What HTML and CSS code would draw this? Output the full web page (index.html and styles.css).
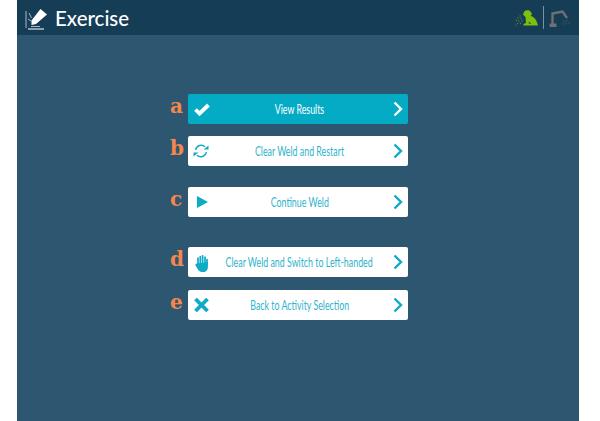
FILE: index.html
```html
<!DOCTYPE html>
<html lang="en">
<head>
<meta charset="utf-8">
<title>Exercise</title>
<link rel="stylesheet" href="styles.css">
</head>
<body>
<div class="stage">
  <header class="header">
    <div class="brand">
      <svg class="logo" viewBox="0 0 24 24" width="24" height="24">
        <path d="M7.500 14.500 16.500 3 23 8.500 12 18l-4.500 1z" fill="#fff"/>
        <path d="M2 5v17M5 7l2.500 5M4 13l3 2" stroke="#a9bac5" stroke-width="1" fill="none"/>
        <path d="M7 20.500h9" stroke="#a9bac5" stroke-width="1"/>
        <path d="M4 23h16" stroke="#a9bac5" stroke-width="1.600"/>
      </svg>
      <h1 class="title"><span class="title-text">Exercise</span></h1>
    </div>
    <div class="status">
      <svg class="frog" viewBox="0 0 24 18" width="24" height="18">
        <path d="M9 3C10 1 14 .5 15.500 2.500L17 5l-1.500 2C18.500 7.500 21.500 10 23 16.500H14.500V15H16l-2-2.500-.5 2H15v2H8.500V15l2.500-1-.5-6L8 5.500z" fill="#7cc00c"/>
        <g fill="#4f8a3a">
          <circle cx="5" cy="7" r=".7"/><circle cx="3" cy="9" r=".7"/><circle cx="6" cy="9.500" r=".7"/><circle cx="1.500" cy="11.500" r=".7"/><circle cx="4" cy="12" r=".7"/><circle cx="7" cy="12" r=".7"/><circle cx="2.500" cy="14.500" r=".7"/><circle cx="5.500" cy="14.500" r=".7"/><circle cx="1" cy="16" r=".6"/>
        </g>
      </svg>
      <span class="divider"></span>
      <svg class="robot" viewBox="0 0 21 18" width="21" height="18">
        <path d="M3.500 16V4.500L13.500 2.500 18 9" fill="none" stroke="#6f7072" stroke-width="2.400"/>
        <path d="M0.500 14.500h7V18h-7z" fill="#6f7072"/>
        <g fill="#4d5d68"><circle cx="15" cy="12" r=".7"/><circle cx="18" cy="11.500" r=".7"/><circle cx="17" cy="14" r=".7"/><circle cx="20" cy="14" r=".7"/><circle cx="14" cy="15" r=".7"/></g>
      </svg>
    </div>
  </header>
  <main class="menu">
    <div class="row">
      <span class="key">a</span>
      <a class="btn btn-active">
        <svg class="icon" viewBox="0 0 20 20" width="20" height="20"><path d="M3.500 10.500l4 4L16.500 6" fill="none" stroke="#fff" stroke-width="3.800"/></svg>
        <span class="label"><span class="text">View Results</span></span>
        <svg class="chev" viewBox="0 0 12 18" width="12" height="18"><path d="M2.500 2.500L9 9l-6.500 6.500" fill="none" stroke="#fff" stroke-width="2.400"/></svg>
      </a>
    </div>
    <div class="row gap-b">
      <span class="key">b</span>
      <a class="btn">
        <svg class="icon" viewBox="0 0 20 20" width="20" height="20"><path d="M3.700 9a5.500 5.500 0 0 1 9.300-3.200M14.300 11a5.500 5.500 0 0 1-9.300 3.200" fill="none" stroke="#13a8c4" stroke-width="1.400"/><path d="M11.500 8.500h5V4.500zM6.500 11.500h-5V15.500z" fill="#13a8c4"/></svg>
        <span class="label"><span class="text">Clear Weld and Restart</span></span>
        <svg class="chev" viewBox="0 0 12 18" width="12" height="18"><path d="M2.500 2.500L9 9l-6.500 6.500" fill="none" stroke="#0dabc6" stroke-width="2.400"/></svg>
      </a>
    </div>
    <div class="row gap-c">
      <span class="key">c</span>
      <a class="btn">
        <svg class="icon" viewBox="0 0 20 20" width="20" height="20"><path d="M5 4l11 6-11 6z" fill="#0dabc6"/></svg>
        <span class="label"><span class="text">Continue Weld</span></span>
        <svg class="chev" viewBox="0 0 12 18" width="12" height="18"><path d="M2.500 2.500L9 9l-6.500 6.500" fill="none" stroke="#0dabc6" stroke-width="2.400"/></svg>
      </a>
    </div>
    <div class="row gap-d">
      <span class="key">d</span>
      <a class="btn">
        <svg class="icon" viewBox="0 0 20 20" width="20" height="20">
          <path d="M6 13V6M8.300 12V4.500M10.600 12V3.800M13 12V5M15 13V7.500" fill="none" stroke="#0dabc6" stroke-width="1.700" stroke-linecap="round"/>
          <path d="M5.200 11.500 15.900 10V15c0 3-2 5-4.500 5H10c-2 0-3-1-4-2.500L3.500 13.500c-.6-1.200.8-2.400 1.700-2z" fill="#0dabc6"/>
        </svg>
        <span class="label"><span class="text">Clear Weld and Switch to Left-handed</span></span>
        <svg class="chev" viewBox="0 0 12 18" width="12" height="18"><path d="M2.500 2.500L9 9l-6.500 6.500" fill="none" stroke="#0dabc6" stroke-width="2.400"/></svg>
      </a>
    </div>
    <div class="row gap-e">
      <span class="key">e</span>
      <a class="btn">
        <svg class="icon" viewBox="0 0 20 20" width="20" height="20"><path d="M3.500 4l12 12M15.500 4l-12 12" fill="none" stroke="#0dabc6" stroke-width="3.800"/></svg>
        <span class="label"><span class="text">Back to Activity Selection</span></span>
        <svg class="chev" viewBox="0 0 12 18" width="12" height="18"><path d="M2.500 2.500L9 9l-6.500 6.500" fill="none" stroke="#0dabc6" stroke-width="2.400"/></svg>
      </a>
    </div>
  </main>
</div>
</body>
</html>
```

FILE: styles.css
```css
html, body {
  margin: 0;
  height: 100%;
  background: #fff;
}
.stage {
  margin-left: 17px;
  width: 562px;
  height: 421px;
  background: #2d5770;
  display: flex;
  flex-direction: column;
  overflow: hidden;
}
.header {
  height: 35px;
  flex: none;
  background: #153d56;
  display: flex;
  align-items: center;
  justify-content: space-between;
  padding: 0 9px 0 7px;
}
.brand {
  display: flex;
  align-items: center;
  gap: 7px;
}
.logo {
  display: block;
}
.title {
  margin: 0;
  font: 500 22px/35px "Lato", sans-serif;
  color: #fff;
}
.title-text {
  display: inline-block;
  transform: scaleX(0.93);
  transform-origin: left center;
}
.status {
  display: flex;
  align-items: center;
  gap: 4px;
}
.divider {
  width: 1px;
  height: 23px;
  background: #7e919e;
}
.robot {
  margin-left: 1px;
}
.menu {
  display: flex;
  flex-direction: column;
  padding: 59px 0 0 153px;
}
.row {
  display: flex;
  align-items: center;
}
.gap-b { margin-top: 12px; }
.gap-c { margin-top: 21px; }
.gap-d { margin-top: 30px; }
.gap-e { margin-top: 13px; }
.key {
  width: 18px;
  flex: none;
  font: 700 20px/26px "DejaVu Serif", serif;
  color: #f5864c;
  margin-top: -6px;
}
.btn {
  width: 220px;
  height: 30px;
  box-sizing: border-box;
  border-radius: 2px;
  background: #fff;
  color: #2fb3cc;
  display: grid;
  grid-template-columns: 20px minmax(0, 1fr) 17px;
  align-items: center;
  padding: 0 4px;
}
.btn-active {
  background: #03abc5;
  color: #fff;
}
.icon, .chev {
  display: block;
}
.chev {
  grid-column: 3;
  justify-self: end;
}
.label {
  display: flex;
  justify-content: center;
  min-width: 0;
}
.text {
  flex: none;
  transform: scaleX(0.68);
  font: 400 13px/30px "Lato", sans-serif;
  white-space: nowrap;
}
```
